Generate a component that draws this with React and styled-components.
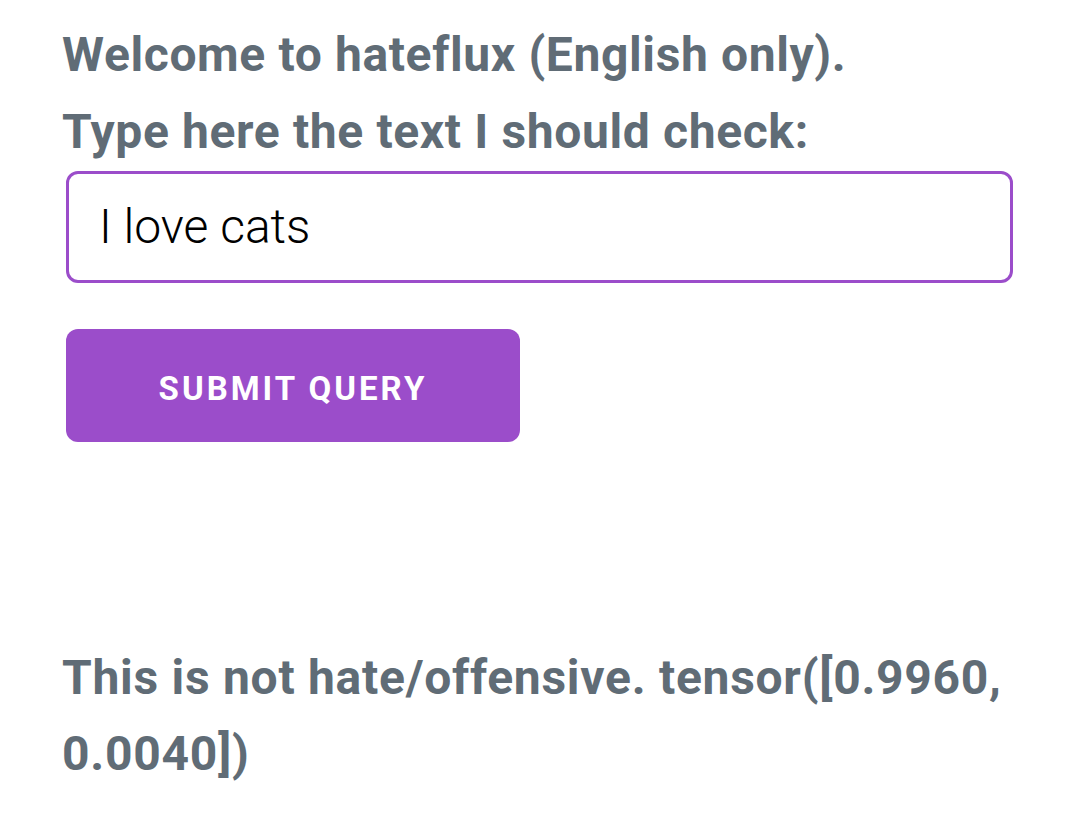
import React, { useState } from 'react';
import styled, { createGlobalStyle } from 'styled-components';

const GlobalStyle = createGlobalStyle`
  html, body {
    margin: 0;
    padding: 0;
    background: #fff;
  }
  body {
    font-family: Roboto, 'Liberation Sans', sans-serif;
    color: #606c76;
    letter-spacing: 0.01em;
  }
`;

const Page = styled.div`
  padding: 17px 67px 0 62px;
`;

const Line = styled.div`
  font-size: 48px;
  font-weight: 700;
  line-height: 76.8px;
  letter-spacing: 0.013em;
  color: #606c76;
`;

const Form = styled.form`
  display: flex;
  flex-direction: column;
  align-items: flex-start;
  gap: 46px;
  padding-left: 4px;
`;

const TextInput = styled.input`
  box-sizing: border-box;
  width: 100%;
  height: 112px;
  padding: 0 30px;
  border: 3px solid #9b4dca;
  border-radius: 12px;
  outline: none;
  font-family: Roboto, 'Liberation Sans', sans-serif;
  font-size: 48px;
  font-weight: 300;
  color: #000;
  background: #fff;
`;

const SubmitButton = styled.button`
  box-sizing: border-box;
  width: 454px;
  height: 113px;
  padding: 6px 0 0;
  border: 0;
  border-radius: 12px;
  background: #9b4dca;
  color: #fff;
  font-family: Roboto, 'Liberation Sans', sans-serif;
  font-size: 33px;
  font-weight: 700;
  letter-spacing: 3px;
  text-transform: uppercase;
  cursor: pointer;
`;

const Result = styled(Line)`
  margin-top: 198px;
  letter-spacing: 0.015em;
`;

const App = () => {
  const [text, setText] = useState('I love cats');

  return (
    <Page>
      <GlobalStyle />
      <Line>Welcome to hateflux (English only).</Line>
      <Line>Type here the text I should check:</Line>
      <Form onSubmit={(e) => e.preventDefault()}>
        <TextInput value={text} onChange={(e) => setText(e.target.value)} />
        <SubmitButton type="submit">Submit Query</SubmitButton>
      </Form>
      <Result>
        This is not hate/offensive. tensor([0.9960,
        <br />
        0.0040])
      </Result>
    </Page>
  );
};

export default App;
